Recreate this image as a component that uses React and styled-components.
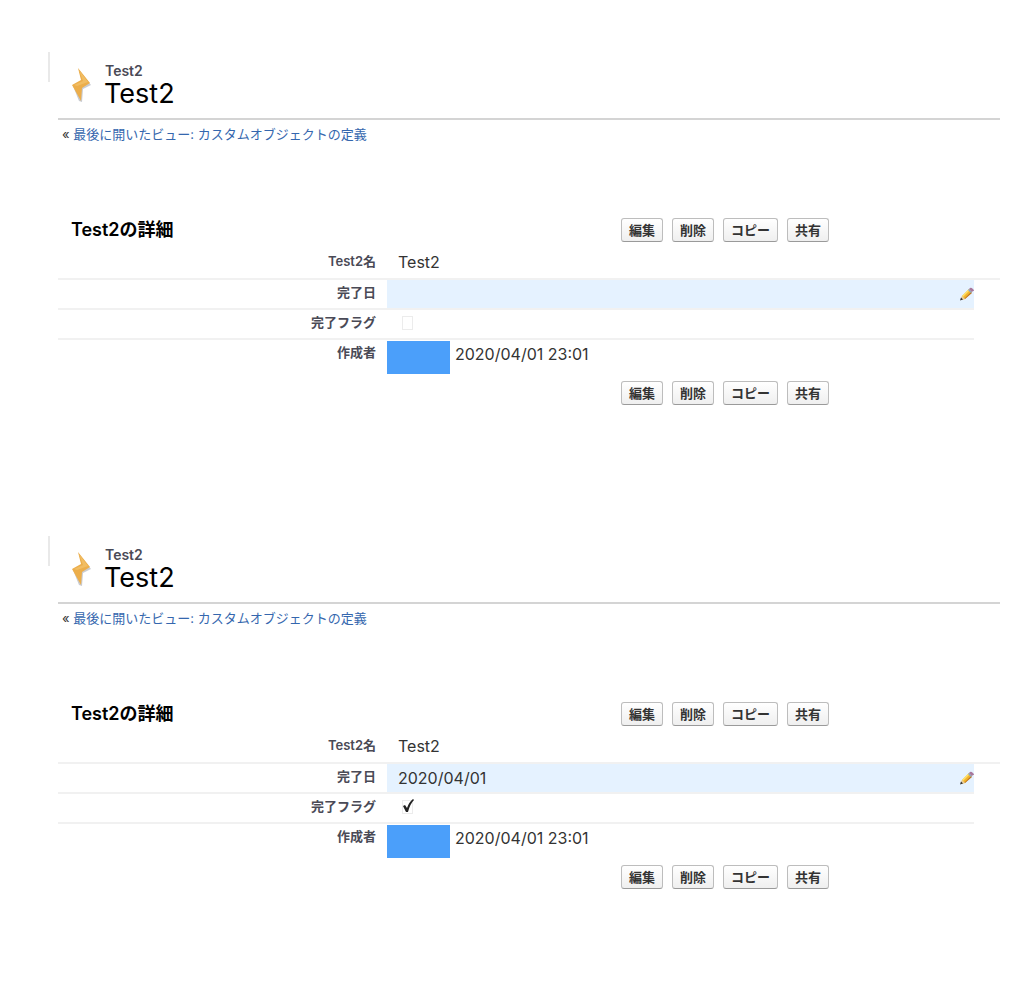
import React, { useState } from "react";
import styled, { createGlobalStyle } from "styled-components";

const GlobalStyle = createGlobalStyle`
  * {
    box-sizing: border-box;
  }

  body {
    margin: 0;
    background: #fff;
    color: #333;
    font-family: Inter, "Noto Sans CJK JP", sans-serif;
  }
`;

const Page = styled.main`
  display: flex;
  flex-direction: column;
  gap: 131px;
  padding: 52px 24px 116px 48px;
`;

const Record = styled.article`
  display: flex;
  flex-direction: column;
`;

const PageTitle = styled.header`
  display: flex;
  align-items: flex-start;
  height: 66px;
`;

const Edge = styled.span`
  width: 2px;
  height: 30px;
  margin-right: 20px;
  background: #e9e9e9;
`;

const BoltIcon = styled.svg`
  width: 24px;
  height: 36px;
  margin-top: 16px;
  margin-right: 10px;
`;

const TypeName = styled.p`
  margin: 10px 0 0;
  padding-left: 1px;
  color: #4a4a56;
  font-size: 14px;
  font-weight: 600;
  line-height: 18px;
`;

const RecordName = styled.h1`
  margin: 0;
  color: #000;
  font-size: 27px;
  font-weight: 400;
  line-height: 28px;
`;

const Content = styled.div`
  margin-left: 10px;
`;

const BackRow = styled.nav`
  height: 96px;
  padding: 4px;
  border-top: 2px solid #d4d4d4;
  font-size: 13px;
  line-height: 20px;
`;

const BackLink = styled.a`
  color: #3567ae;
  text-decoration: none;
`;

const DetailHeader = styled.div`
  display: grid;
  grid-template-columns: 563px 1fr;
  align-items: center;
  height: 32px;
`;

const DetailTitle = styled.h2`
  margin: 0;
  padding-left: 13px;
  color: #000;
  font-size: 18px;
  font-weight: 600;
  line-height: 24px;
`;

const Buttons = styled.div`
  display: flex;
  gap: 9px;
`;

const ActionButton = styled.button`
  height: 24px;
  padding: 0 7px;
  border: 1px solid #bdbdbd;
  border-bottom-color: #9a9a9a;
  border-radius: 3px;
  background: linear-gradient(#fff, #efefef);
  color: #333;
  font-family: inherit;
  font-size: 13px;
  font-weight: 700;
  line-height: 20px;
`;

const Fields = styled.table`
  width: 100%;
  border-collapse: collapse;
  table-layout: fixed;
`;

const LabelCol = styled.col`
  width: 329px;
`;

const SpareCol = styled.col`
  width: 26px;
`;

const FieldRow = styled.tr`
  height: ${(props) => (props.$first ? "33px" : "30px")};

  > * {
    border-bottom: ${(props) => (props.$last ? "0" : "2px solid #f1f1f1")};
  }

  > :last-child {
    border-bottom-width: ${(props) => (props.$first ? "2px" : "0")};
  }
`;

const FieldLabel = styled.th`
  padding: ${(props) => (props.$first ? "5px" : "2px")} 11px 0 0;
  color: #4a4a56;
  font-size: 13px;
  font-weight: 600;
  line-height: 20px;
  text-align: right;
  vertical-align: top;
`;

const FieldValue = styled.td`
  padding: 0 0 0 ${(props) => (props.$flush ? "0" : "11px")};
  background: ${(props) => (props.$active ? "#e5f2ff" : "transparent")};
  font-size: 16px;
  line-height: 20px;
`;

const SpareCell = styled.td`
  padding: 0;
`;

const ValueLine = styled.div`
  display: flex;
  align-items: center;
  justify-content: space-between;
`;

const EditButton = styled.button`
  display: flex;
  padding: 0;
  border: 0;
  background: none;
`;

const CheckWrap = styled.span`
  position: relative;
  display: block;
  width: 18px;
  height: 16px;
`;

const CheckBox = styled.input`
  display: block;
  width: 11px;
  height: 14px;
  margin: 0 4px;
  border: 1px solid #ececec;
  background: #fff;
  appearance: none;
`;

const CheckMark = styled.svg`
  position: absolute;
  top: -2px;
  left: 4px;
  pointer-events: none;
`;

const Author = styled.div`
  display: flex;
  gap: 5px;
  padding-top: 1px;
  line-height: 26px;
`;

const AuthorName = styled.span`
  width: 63px;
  height: 33px;
  background: #4b9ffa;
`;

const Footer = styled.footer`
  display: grid;
  grid-template-columns: 563px 1fr;
  padding-top: 7px;
`;

function Bolt() {
  return (
    <BoltIcon viewBox="0 0 24 36" aria-hidden="true">
      <path d="M9 2l12 15-8 4-1 13-3-1L3 18l9-4z" fill="#c9ccd2" />
      <path d="M8 0l12 15-8 5-1 13L2 17l9-5z" fill="#ecae4b" />
      <path d="M9 2l4 11-9 4 3 1 11-4z" fill="#f1bd63" />
    </BoltIcon>
  );
}

function Pencil() {
  return (
    <svg width="14" height="14" viewBox="0 0 14 14" aria-hidden="true">
      <path d="M1 13l1-4 7-7 3 3-7 7z" fill="#f2b52c" />
      <path d="M2 9l7-7 1 1-7 7z" fill="#ffe26a" />
      <path d="M4 12l7-7 1 1-7 6z" fill="#bd7421" />
      <path d="M8 3l1-1 3 3-1 1z" fill="#83a5ca" />
      <path d="M9 2l1-1q1-1 3 1t0 2l-1 1z" fill="#a9789d" />
      <path d="M1 13l1-4 3 3z" fill="#e8cfa0" />
      <path d="M0 13.5l1-3 2 2z" fill="#333" />
    </svg>
  );
}

function Actions() {
  return (
    <Buttons>
      <ActionButton type="button">編集</ActionButton>
      <ActionButton type="button">削除</ActionButton>
      <ActionButton type="button">コピー</ActionButton>
      <ActionButton type="button">共有</ActionButton>
    </Buttons>
  );
}

function RecordDetail({ id, date, done }) {
  const [checked, setChecked] = useState(done);

  return (
    <Record>
      <PageTitle>
        <Edge />
        <Bolt />
        <div>
          <TypeName>Test2</TypeName>
          <RecordName>Test2</RecordName>
        </div>
      </PageTitle>
      <Content>
        <BackRow>
          « <BackLink href="#views">最後に開いたビュー: カスタムオブジェクトの定義</BackLink>
        </BackRow>
        <DetailHeader>
          <DetailTitle>Test2の詳細</DetailTitle>
          <Actions />
        </DetailHeader>
        <Fields>
          <colgroup>
            <LabelCol />
            <col />
            <SpareCol />
          </colgroup>
          <tbody>
            <FieldRow $first>
              <FieldLabel scope="row" $first>Test2名</FieldLabel>
              <FieldValue>Test2</FieldValue>
              <SpareCell />
            </FieldRow>
            <FieldRow>
              <FieldLabel scope="row">完了日</FieldLabel>
              <FieldValue $active>
                <ValueLine>
                  <span>{date}</span>
                  <EditButton type="button" aria-label="編集">
                    <Pencil />
                  </EditButton>
                </ValueLine>
              </FieldValue>
              <SpareCell />
            </FieldRow>
            <FieldRow>
              <FieldLabel scope="row">
                <label htmlFor={id}>完了フラグ</label>
              </FieldLabel>
              <FieldValue>
                <CheckWrap>
                  <CheckBox
                    id={id}
                    type="checkbox"
                    checked={checked}
                    onChange={(e) => setChecked(e.target.checked)}
                  />
                  {checked && (
                    <CheckMark width="14" height="15" viewBox="0 0 14 15" aria-hidden="true">
                      <path d="M1 8l2-1 2 3q2-6 6-9l1 1Q8 6 6 14H4z" fill="#222" />
                    </CheckMark>
                  )}
                </CheckWrap>
              </FieldValue>
              <SpareCell />
            </FieldRow>
            <FieldRow $last>
              <FieldLabel scope="row">作成者</FieldLabel>
              <FieldValue $flush>
                <Author>
                  <AuthorName />
                  <span>2020/04/01 23:01</span>
                </Author>
              </FieldValue>
              <SpareCell />
            </FieldRow>
          </tbody>
        </Fields>
        <Footer>
          <span />
          <Actions />
        </Footer>
      </Content>
    </Record>
  );
}

export default function App() {
  return (
    <>
      <GlobalStyle />
      <Page>
        <RecordDetail id="done-open" date="" done={false} />
        <RecordDetail id="done-closed" date="2020/04/01" done />
      </Page>
    </>
  );
}
